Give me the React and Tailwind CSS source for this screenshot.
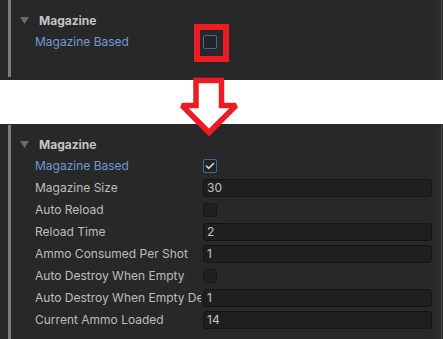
import React from "react";

const font = { fontFamily: "Inter, 'Noto Sans', sans-serif" };

function Tri() {
  return (
    <svg width="9" height="7" viewBox="0 0 9 7" className="shrink-0">
      <polygon points="0,0 9,0 4.5,7" fill="#6b6b6b" />
    </svg>
  );
}

function Header() {
  return (
    <div className="flex h-[21px] items-center pl-[9px]">
      <Tri />
      <span className="ml-[10px] text-[12px] font-bold text-[#c4c4c4]">Magazine</span>
    </div>
  );
}

function Check({ checked, focus }) {
  return (
    <div
      className={
        "flex h-[14px] w-[14px] items-center justify-center rounded-[2px] border " +
        (focus ? "border-[#3b6ba5] bg-[#232323]" : "border-[#1a1a1a] bg-[#202020]")
      }
    >
      {checked && (
        <svg width="10" height="8" viewBox="0 0 10 8">
          <path d="M1.5 4.2 L3.8 6.3 L8.5 1.5" fill="none" stroke="#d8d8d8" strokeWidth="1.6" strokeLinecap="round" strokeLinejoin="round" />
        </svg>
      )}
    </div>
  );
}

function Row({ label, blue, children }) {
  return (
    <div className="flex h-[22px] items-center">
      <div className="w-[192px] shrink-0 pl-[24px] pr-[2px]">
        <div
          className={
            "overflow-hidden whitespace-nowrap text-[12px] " +
            (blue ? "text-[#7299d6]" : "text-[#bdbdbd]")
          }
        >
          {label}
        </div>
      </div>
      {children}
    </div>
  );
}

function Field({ value }) {
  return (
    <div className="flex h-[18px] w-[229px] items-center rounded-[3px] border border-[#141414] bg-[#1f1f1f] pl-[3px] text-[12px] text-[#c4c4c4]">
      {value}
    </div>
  );
}

function RightEdge() {
  return (
    <div className="ml-auto flex h-full">
      <div className="w-[5px] bg-[#2b2b2b]" />
      <div className="w-[1px] bg-[#4b4b4b]" />
      <div className="w-[1px] bg-[#262626]" />
    </div>
  );
}

export default function App() {
  return (
    <div className="relative h-[339px] w-[443px] overflow-hidden bg-white" style={font}>
      <div className="flex h-[80px] bg-[#282828]">
        <div className="ml-[8px] h-[77px] w-[3px] bg-[#7d7d7d]" />
        <div className="flex flex-col pt-[10px]">
          <Header />
          <Row label="Magazine Based" blue>
            <Check focus />
          </Row>
        </div>
        <RightEdge />
      </div>
      <div className="h-[44px]" />
      <div className="flex h-[215px] bg-[#282828]">
        <div className="ml-[8px] mt-[1px] h-[214px] w-[3px] bg-[#7d7d7d]" />
        <div className="flex flex-col pt-[10px]">
          <Header />
          <Row label="Magazine Based" blue>
            <Check checked focus />
          </Row>
          <Row label="Magazine Size">
            <Field value="30" />
          </Row>
          <Row label="Auto Reload">
            <Check />
          </Row>
          <Row label="Reload Time">
            <Field value="2" />
          </Row>
          <Row label="Ammo Consumed Per Shot">
            <Field value="1" />
          </Row>
          <Row label="Auto Destroy When Empty">
            <Check />
          </Row>
          <Row label="Auto Destroy When Empty Delay">
            <Field value="1" />
          </Row>
          <Row label="Current Ammo Loaded">
            <Field value="14" />
          </Row>
        </div>
        <RightEdge />
      </div>

      <div className="pointer-events-none absolute left-[194px] top-[24px] h-[38px] w-[35px] border-[6px] border-[#ed1c24]" />

      <svg className="pointer-events-none absolute left-0 top-0" width="443" height="339" viewBox="0 0 443 339">
        <polygon
          points="196,80.5 221.5,80.5 221.5,105.5 236,105.5 209,132.5 182,105.5 196,105.5"
          fill="#ffffff"
          stroke="#ed1c24"
          strokeWidth="5.5"
          strokeLinejoin="miter"
          strokeMiterlimit="2"
        />
      </svg>
    </div>
  );
}
